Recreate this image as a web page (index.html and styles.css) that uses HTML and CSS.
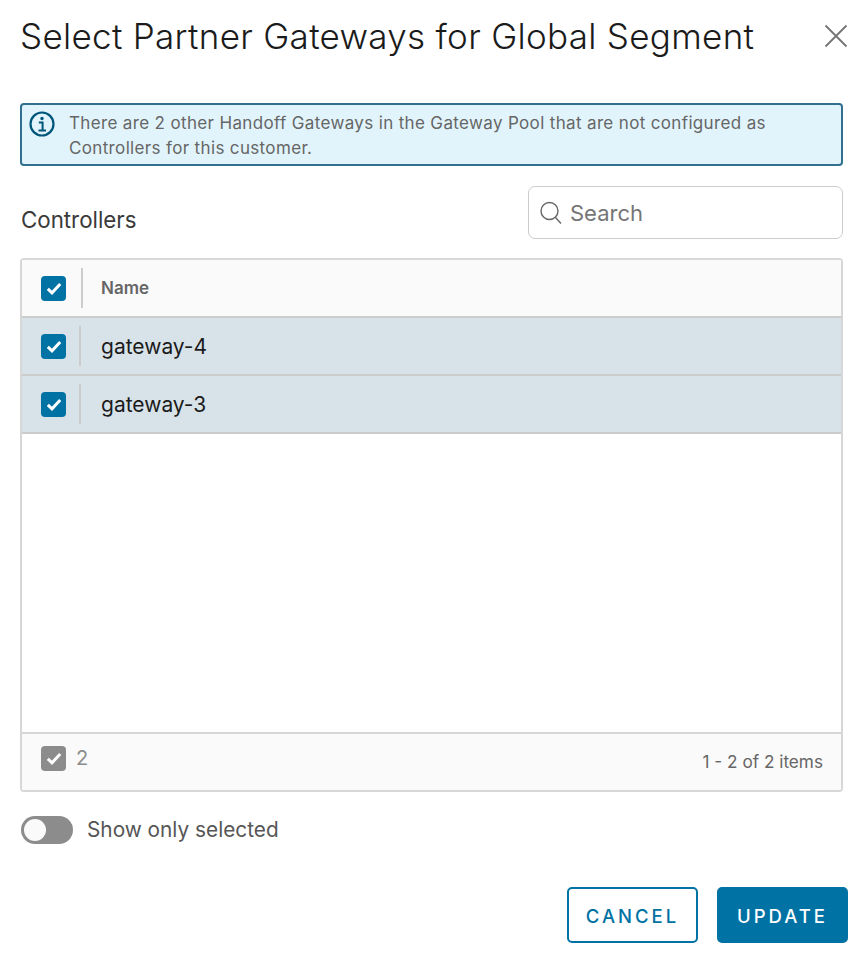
FILE: index.html
```html
<!DOCTYPE html>
<html lang="en">
<head>
    <meta charset="UTF-8">
    <title>Select Partner Gateways</title>
    <link rel="stylesheet" href="styles.css">
</head>
<body>
    <div class="modal">
        <header class="modal-header">
            <h1>Select Partner Gateways for Global Segment</h1>
            <svg class="close-icon" width="24" height="24" viewBox="0 0 24 24"><path d="M1.500 1.500l21 21M22.500 1.500l-21 21" fill="none" stroke="#747474" stroke-width="1.800"/></svg>
        </header>

        <div class="alert">
            <svg class="alert-icon" width="26" height="26" viewBox="0 0 26 26">
                <circle cx="13" cy="13" r="11.500" fill="none" stroke="#00567a" stroke-width="2.200"/>
                <circle cx="13" cy="7.500" r="1.700" fill="#00567a"/>
                <path d="M9.800 11.500h3.800v7.500M9.500 19.500h7.500" fill="none" stroke="#00567a" stroke-width="2"/>
            </svg>
            <p>There are 2 other Handoff Gateways in the Gateway Pool that are not configured as Controllers for this customer.</p>
        </div>

        <div class="toolbar">
            <h2>Controllers</h2>
            <div class="search">
                <svg width="24" height="26" viewBox="0 0 24 26"><circle cx="10.500" cy="11" r="8.500" fill="none" stroke="#666" stroke-width="1.400"/><path d="M16.500 17.500l5.500 6" fill="none" stroke="#666" stroke-width="1.400"/></svg>
                <span>Search</span>
            </div>
        </div>

        <div class="grid">
            <div class="row head">
                <div class="check-cell"><span class="check"><svg width="16" height="13" viewBox="0 0 16 13"><path d="M1.800 6.800l4.200 4 8.200-8.800" fill="none" stroke="#fff" stroke-width="3"/></svg></span></div>
                <div class="cell">Name</div>
            </div>
            <div class="row selected">
                <div class="check-cell"><span class="check"><svg width="16" height="13" viewBox="0 0 16 13"><path d="M1.800 6.800l4.200 4 8.200-8.800" fill="none" stroke="#fff" stroke-width="3"/></svg></span></div>
                <div class="cell">gateway-4</div>
            </div>
            <div class="row selected">
                <div class="check-cell"><span class="check"><svg width="16" height="13" viewBox="0 0 16 13"><path d="M1.800 6.800l4.200 4 8.200-8.800" fill="none" stroke="#fff" stroke-width="3"/></svg></span></div>
                <div class="cell">gateway-3</div>
            </div>
            <div class="grid-body"></div>
            <div class="grid-footer">
                <div class="footer-count">
                    <span class="check grey"><svg width="16" height="13" viewBox="0 0 16 13"><path d="M1.800 6.800l4.200 4 8.200-8.800" fill="none" stroke="#fff" stroke-width="3"/></svg></span>
                    <span>2</span>
                </div>
                <div class="footer-pages">1 - 2 of 2 items</div>
            </div>
        </div>

        <div class="toggle-row">
            <span class="toggle"></span>
            <span class="toggle-label">Show only selected</span>
        </div>

        <div class="actions">
            <button class="btn btn-outline" type="button">CANCEL</button>
            <button class="btn btn-primary" type="button">UPDATE</button>
        </div>
    </div>
</body>
</html>
```
FILE: styles.css
```css
body {
    margin: 0;
    background-color: #FFFFFF;
    font-family: 'Inter', 'Lato', sans-serif;
    color: #565656;
}

.modal {
    width: 868px;
    height: 972px;
    padding: 0 25px 0 20px;
    box-sizing: border-box;
}

.modal-header {
    display: flex;
    justify-content: space-between;
    align-items: center;
    height: 72px;
    margin-bottom: 31px;
}

.modal-header h1 {
    margin: 0;
    font-size: 35px;
    font-weight: 300;
    color: #1b1b1b;
    letter-spacing: 0.3px;
}

.close-icon {
    margin-right: -5px;
}

.alert {
    display: flex;
    gap: 14px;
    height: 63px;
    box-sizing: border-box;
    padding: 6px 7px;
    background-color: #E1F4FC;
    border: 2px solid #31708F;
    border-radius: 4px;
}

.alert-icon {
    flex-shrink: 0;
}

.alert p {
    margin: 0;
    font-size: 17px;
    line-height: 25px;
    font-weight: 400;
    letter-spacing: 0.35px;
    color: #666666;
}

.toolbar {
    display: flex;
    justify-content: space-between;
    align-items: flex-start;
    margin-top: 20px;
    margin-bottom: 19px;
}

.toolbar h2 {
    margin: 20px 0 0 1px;
    font-size: 22.300px;
    font-weight: 400;
    line-height: 27px;
    color: #3a3a3a;
}

.search {
    display: flex;
    align-items: center;
    gap: 7px;
    width: 315px;
    height: 53px;
    box-sizing: border-box;
    padding-left: 10px;
    border: 1px solid #CCCCCC;
    border-radius: 7px;
    font-size: 22px;
    color: #757575;
}

.grid {
    display: flex;
    flex-direction: column;
    height: 534px;
    box-sizing: border-box;
    border: 2px solid #D7D7D7;
    border-radius: 4px;
}

.row {
    display: flex;
    align-items: center;
    height: 58px;
    flex-shrink: 0;
    box-sizing: border-box;
    border-bottom: 2px solid #CCCCCC;
}

.row.head {
    background-color: #FAFAFA;
    font-size: 17px;
    font-weight: 600;
    color: #666666;
}

.row.selected {
    background-color: #D8E3E9;
    font-size: 21px;
    color: #1b1b1b;
}

.check-cell {
    display: flex;
    align-items: center;
    width: 61px;
    height: 40px;
    box-sizing: border-box;
    padding-left: 19px;
    border-right: 2px solid #CCCCCC;
}

.row.selected .check-cell {
    width: 59px;
}

.cell {
    padding-left: 18px;
}

.row.selected .cell {
    padding-left: 20px;
}

.check {
    display: flex;
    align-items: center;
    justify-content: center;
    width: 25px;
    height: 25px;
    background-color: #0072A3;
    border-radius: 4px;
}

.check.grey {
    background-color: #8C8C8C;
}

.grid-body {
    flex: 1;
}

.grid-footer {
    display: flex;
    justify-content: space-between;
    height: 58px;
    box-sizing: border-box;
    padding: 12px 18px 0 19px;
    background-color: #FAFAFA;
    border-top: 2px solid #D7D7D7;
}

.footer-count {
    display: flex;
    gap: 10px;
    font-size: 20px;
    line-height: 25px;
    color: #8C8C8C;
}

.footer-pages {
    padding-top: 3px;
    font-size: 17.200px;
    line-height: 26px;
    color: #666666;
}

.toggle-row {
    display: flex;
    align-items: center;
    gap: 14px;
    margin-top: 24px;
    padding-left: 1px;
    font-size: 20.800px;
    color: #565656;
}

.toggle-label {
    padding-bottom: 2px;
}

.toggle {
    display: block;
    position: relative;
    width: 52px;
    height: 28px;
    background-color: #8C8C8C;
    border-radius: 14px;
}

.toggle::after {
    content: "";
    position: absolute;
    top: 3px;
    left: 3px;
    width: 22px;
    height: 22px;
    background-color: #FAFAFA;
    border-radius: 50%;
}

.actions {
    display: flex;
    justify-content: flex-end;
    gap: 19px;
    margin-top: 43px;
    margin-right: -5px;
}

.btn {
    width: 131px;
    height: 56px;
    padding-top: 2px;
    border-radius: 5px;
    font-family: inherit;
    font-size: 18.500px;
    font-weight: 500;
    letter-spacing: 3px;
}

.btn-outline {
    background-color: #FFFFFF;
    border: 2px solid #0072A3;
    color: #0072A3;
}

.btn-primary {
    background-color: #0072A3;
    border: 2px solid #0072A3;
    color: #FFFFFF;
}
```
